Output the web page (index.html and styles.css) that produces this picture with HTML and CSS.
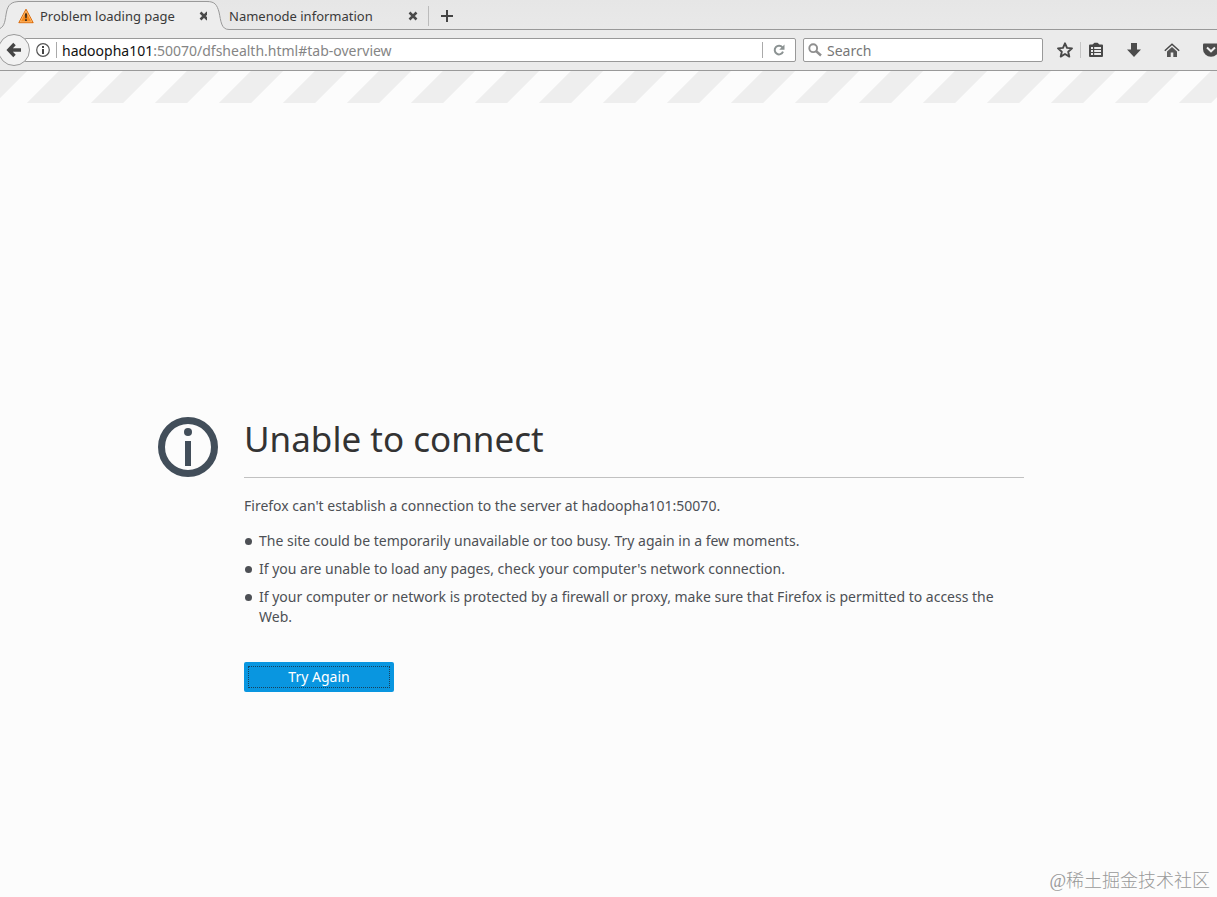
FILE: index.html
```html
<!DOCTYPE html>
<html lang="en">
<head>
<meta charset="utf-8">
<title>Problem loading page</title>
<link rel="stylesheet" href="styles.css">
</head>
<body>
<header class="chrome">
  <div class="tabs">
    <div class="tab tab-active">
      <svg class="tab-edge" width="20" height="30" viewBox="0 0 20 30" aria-hidden="true"><path class="edge-fill" d="M0 30V28.500C5 26 5 20 6.500 12C8 5 11 1.500 20 1.500V30Z"/><path class="edge-line" d="M0 28.500C5 26 5 20 6.500 12C8 5 11 1.500 20 1.500"/></svg>
      <div class="tab-body">
        <svg width="16" height="16" viewBox="0 0 16 16" aria-hidden="true"><path d="M8 1.200 15.200 14.700H.8Z" fill="#f58a1f" stroke="#d96a0b" stroke-linejoin="round"/><path d="M8 3 13.800 13.800H2.200Z" fill="none" stroke="#ffc07a" stroke-width=".8"/><path d="M7 5.500h2L8.700 10.300H7.300ZM7.100 11.300h1.800v1.600H7.100Z" fill="#3b2a1a"/></svg>
        <span class="tab-title">Problem loading page</span>
        <button class="close" aria-label="Close tab"><svg width="10" height="10" viewBox="0 0 10 10"><path d="M1.500 1.500 8.500 8.500M8.500 1.500 1.500 8.500" stroke="#4a4a4a" stroke-width="2.500"/></svg></button>
      </div>
      <svg class="tab-edge" width="22" height="30" viewBox="0 0 22 30" aria-hidden="true"><path class="edge-fill" d="M0 1.500C8 1.500 10 5 12 12C14 21 14 29.500 22 29.500V30H0Z"/><path class="edge-line" d="M0 1.500C8 1.500 10 5 12 12C14 21 14 29.500 22 29.500"/></svg>
    </div>
    <div class="tab tab-rest">
      <span class="tab-title">Namenode information</span>
      <button class="close" aria-label="Close tab"><svg width="10" height="10" viewBox="0 0 10 10"><path d="M1.500 1.500 8.500 8.500M8.500 1.500 1.500 8.500" stroke="#4a4a4a" stroke-width="2.500"/></svg></button>
    </div>
    <div class="new-tab">
      <button aria-label="New tab"><svg width="12" height="12" viewBox="0 0 12 12"><path d="M6 0V12M0 6H12" stroke="#444" stroke-width="2"/></svg></button>
    </div>
  </div>
  <div class="toolbar">
    <button class="back" aria-label="Back"><svg width="16" height="16" viewBox="0 0 16 16"><path d="M8.500 2 2.800 8l5.700 6M3 8H15" fill="none" stroke="#454545" stroke-width="3.400"/></svg></button>
    <div class="field address">
      <svg width="14" height="14" viewBox="0 0 14 14" aria-hidden="true"><circle cx="7" cy="7" r="6.300" fill="none" stroke="#555" stroke-width="1.200"/><path d="M6 6h2v5H6ZM6 3h2v2H6Z" fill="#444"/></svg>
      <span class="rule"></span>
      <div class="url" role="textbox" aria-label="Address" contenteditable="true" spellcheck="false"><span class="host">hadoopha101</span>:50070/dfshealth.html#tab-overview</div>
      <span class="rule"></span>
      <button class="reload" aria-label="Reload"><svg width="12" height="12" viewBox="0 0 12 12"><path d="M9.400 3.400A4.300 4.300 0 1 0 10 7.700" fill="none" stroke="#8b9292" stroke-width="2"/><path d="M11.500 .5V5.800H6.200Z" fill="#8b9292"/></svg></button>
    </div>
    <div class="field search">
      <svg width="14" height="14" viewBox="0 0 14 14" aria-hidden="true"><circle cx="5.200" cy="5.200" r="3.900" fill="none" stroke="#8f8f8f" stroke-width="1.900"/><path d="M8 8 13 12.500" stroke="#8f8f8f" stroke-width="2.400"/></svg>
      <input type="text" aria-label="Search" placeholder="Search">
    </div>
    <div class="actions">
      <button aria-label="Bookmark this page"><svg width="18" height="18" viewBox="0 0 18 18"><path d="M9 2.300 11 6.900 16 7.400 12.200 10.700 13.300 15.600 9 13 4.700 15.600 5.800 10.700 2 7.400 7 6.900Z" fill="none" stroke="#484848" stroke-width="1.900" stroke-linejoin="round"/></svg></button>
      <span class="rule"></span>
      <button class="bookmarks" aria-label="Show bookmarks"><svg width="16" height="16" viewBox="0 0 16 16"><path d="M1 3.500Q1 2.500 2 2.500H4.500L6.500 .8H9.500L11.500 2.500H14Q15 2.500 15 3.500V14Q15 15 14 15H2Q1 15 1 14Z" fill="#484848"/><path d="M3 5h2v2H3ZM6.200 5H13v2H6.200ZM3 8h2v2H3ZM6.200 8H13v2H6.200ZM3 11h2v2H3ZM6.200 11H13v2H6.200Z" fill="#ebebeb"/></svg></button>
      <button class="spaced" aria-label="Downloads"><svg width="16" height="16" viewBox="0 0 16 16"><path d="M5 1H11V7.500H15L8 15 1 7.500H5Z" fill="#4c4c4c"/></svg></button>
      <button class="spaced" aria-label="Home"><svg width="16" height="16" viewBox="0 0 16 16"><path d="M.8 8.800 8 2.200 15.200 8.800" fill="none" stroke="#484848" stroke-width="1.500"/><path d="M3 9.500 8 5 13 9.500V15H9.300V10.500H6.700V15H3Z" fill="#555"/></svg></button>
      <button class="spaced" aria-label="Pocket"><svg width="18" height="16" viewBox="0 0 18 16"><path d="M2 1.500H16Q17 1.500 17 2.500V7A8 7.800 0 0 1 1 7V2.500Q1 1.500 2 1.500Z" fill="#4c4c4c"/><path d="M5 5.500 9 9.300 13 5.500" fill="none" stroke="#eee" stroke-width="2"/></svg></button>
    </div>
  </div>
</header>
<main class="page">
  <div class="stripes"></div>
  <section class="error">
    <svg class="info" width="60" height="60" viewBox="0 0 60 60" aria-hidden="true"><circle cx="30" cy="30" r="26.500" fill="none" stroke="#424e5a" stroke-width="7"/><circle cx="30" cy="15" r="4" fill="#424e5a"/><path d="M27 24h6v25h-6Z" fill="#424e5a"/></svg>
    <div class="error-text">
      <h1>Unable to connect</h1>
      <p>Firefox can't establish a connection to the server at hadoopha101:50070.</p>
      <ul>
        <li>The site could be temporarily unavailable or too busy. Try again in a few moments.</li>
        <li>If you are unable to load any pages, check your computer's network connection.</li>
        <li>If your computer or network is protected by a firewall or proxy, make sure that Firefox is permitted to access the Web.</li>
      </ul>
      <button class="retry"><span>Try Again</span></button>
    </div>
  </section>
  <footer class="watermark" lang="zh">@稀土掘金技术社区</footer>
</main>
</body>
</html>
```
FILE: styles.css
```css
* { box-sizing: border-box; }
body {
  margin: 0;
  min-height: 100vh;
  display: flex;
  flex-direction: column;
  overflow-x: hidden;
  background: #fcfcfc;
  font-family: "Noto Sans", sans-serif;
}
button {
  display: flex;
  align-items: center;
  justify-content: center;
  padding: 0;
  border: 0;
  background: none;
  font: inherit;
}
svg { flex: none; display: block; }
.chrome { background: #ebebeb; border-bottom: 1px solid #999; }
.tabs { display: flex; height: 30px; background: linear-gradient(#e6e6e6, #e9e9e9); }
.tab { display: flex; flex: none; font-size: 13px; color: #3a3a3a; }
.tab-title { flex: 1; white-space: nowrap; }
.edge-fill { fill: #ededed; }
.edge-line { fill: none; stroke: #999; }
.tab-body {
  display: flex;
  align-items: center;
  flex: none;
  width: 191px;
  height: 30px;
  margin: 0 -2px;
  padding: 2px 0 0;
  gap: 6px;
  background: linear-gradient(#e6e6e6 1px, #999 1px, #999 2px, #ededed 2px);
}
.tab-rest, .new-tab {
  align-items: center;
  padding-top: 2px;
  border-bottom: 1px solid #999;
}
.tab-rest { width: 199px; padding-right: 10px; }
.new-tab { flex: 1; display: flex; }
.new-tab button { height: 20px; padding-left: 12px; border-left: 1px solid #bbb; }
.close { flex: none; width: 10px; height: 20px; }
.toolbar { display: flex; align-items: center; height: 40px; }
.back {
  z-index: 1;
  width: 32px;
  height: 32px;
  flex: none;
  margin-left: -2px;
  border: 1px solid #999;
  border-radius: 50%;
  background: #f2f2f2;
}
.field {
  display: flex;
  align-items: center;
  height: 24px;
  border: 1px solid #999;
  border-radius: 2px;
  background: #fff;
  font-size: 14px;
}
.address { flex: 1; min-width: 0; margin-left: -6px; padding-left: 11px; }
.rule { flex: none; width: 1px; height: 16px; background: #aaa; }
.address svg + .rule { margin-left: 6px; }
.url { flex: 1; min-width: 0; padding-left: 5px; overflow: hidden; white-space: nowrap; color: #858585; }
.host { color: #111; }
.reload { width: 32px; height: 22px; }
.search { width: 240px; margin-left: 7px; padding-left: 4px; gap: 5px; }
.search input { width: 100%; min-width: 0; border: 0; padding: 0; background: none; font: inherit; outline: 0; }
.search input::placeholder { color: #777; opacity: 1; }
.actions { display: flex; align-items: center; flex: none; margin-left: 13px; margin-right: -3px; }
.actions .rule { margin-left: 6px; background: #c5c5c5; }
.bookmarks { margin-left: 7px; }
.spaced { margin-left: 22px; }
.page { flex: 1; display: flex; flex-direction: column; }
.stripes {
  height: 32px;
  background: linear-gradient(-45deg, #eee 0 33%, #fcfcfc 34% 66%, #eee 67%) -5px 0 / 64px 32px repeat-x;
}
.error {
  display: flex;
  gap: 26px;
  max-width: 1024px;
  padding: 310px 0 24px 158px;
  color: #4d5055;
  font-size: 14px;
  line-height: 20px;
}
.info { margin-top: 4px; }
.error-text { flex: 1; }
h1 {
  margin: 0 0 18px;
  padding-bottom: 12px;
  border-bottom: 1px solid #c1c1c1;
  color: #333;
  font-size: 35px;
  font-weight: 400;
  line-height: 52px;
}
p { margin: 0 0 15px; }
ul { margin: 0 0 35px; padding-left: 15px; }
li { margin-bottom: 8px; padding: 0; list-style: none; }
li::before {
  content: "";
  float: left;
  width: 7px;
  height: 7px;
  margin: 7px 0 0 -14px;
  border-radius: 50%;
  background: #4d5055;
}
.retry {
  width: 150px;
  height: 30px;
  padding: 4px;
  border-radius: 2px;
  background: #0996e0;
  color: #fff;
}
.retry span { flex: 1; border: 1px dotted #17415c; }
.watermark {
  margin-top: auto;
  padding: 0 7px 4px 0;
  text-align: right;
  color: #999;
  font: 300 18px/24px "Liberation Serif", "Noto Sans CJK SC", serif;
}
```
